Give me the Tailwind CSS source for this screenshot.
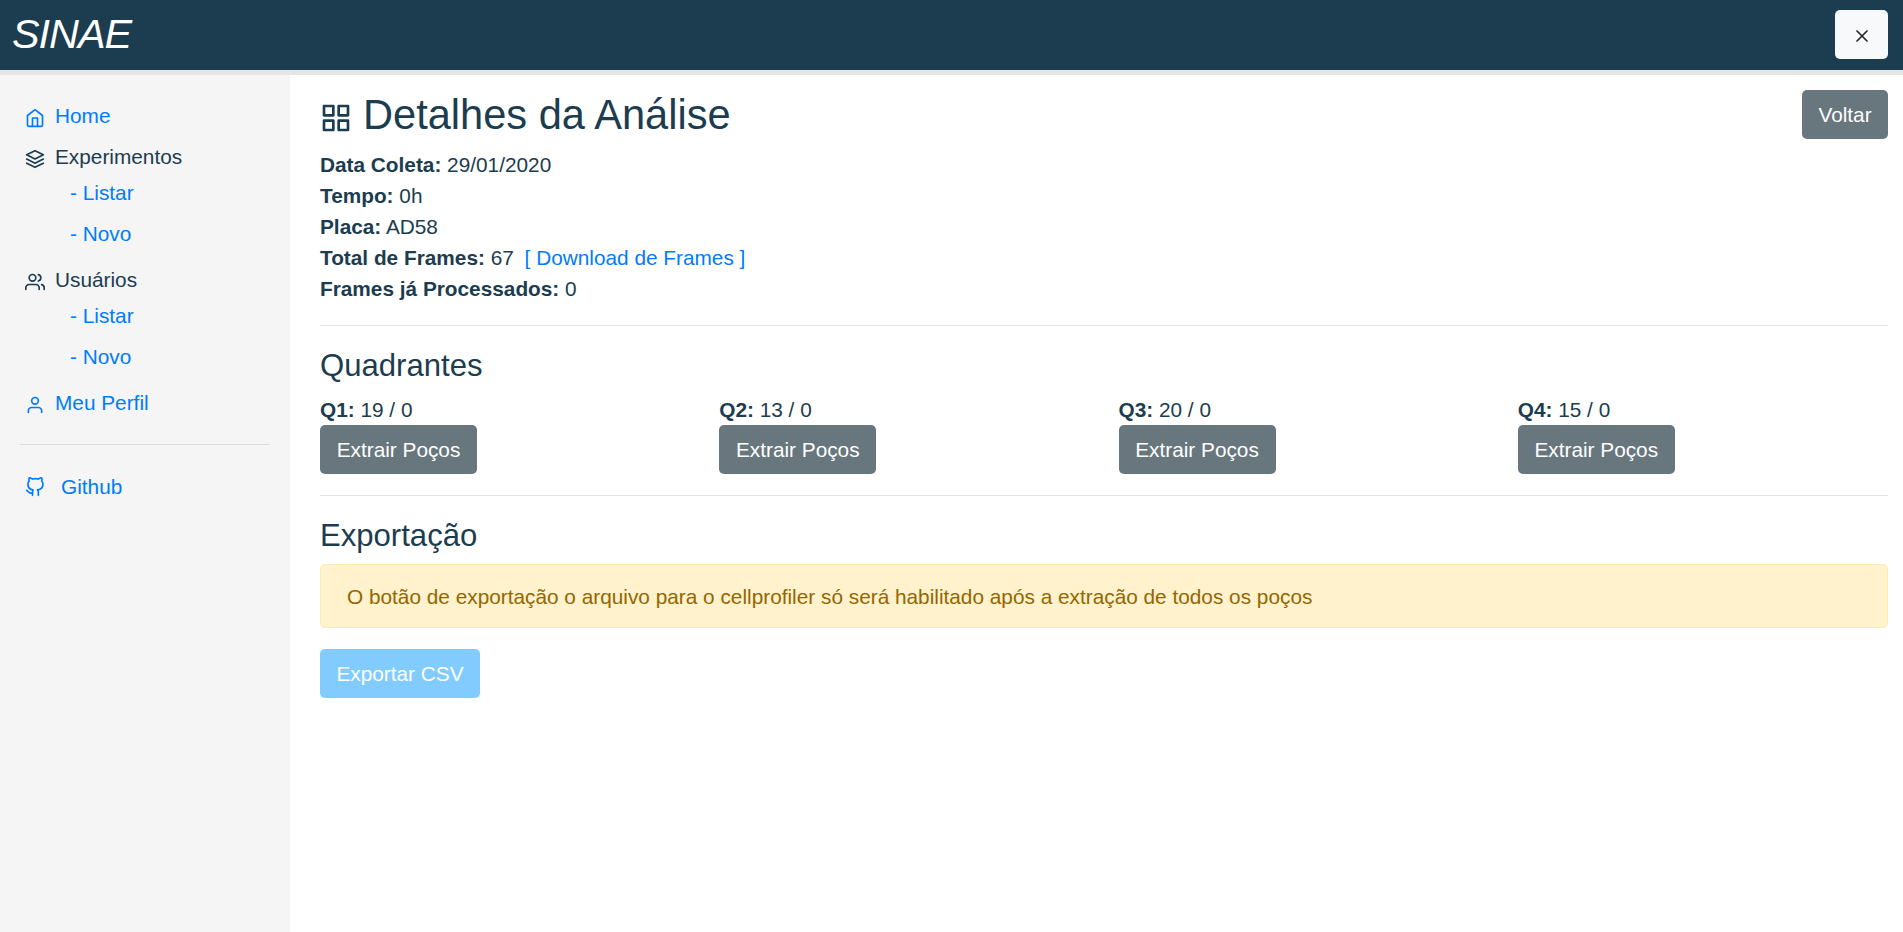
<!DOCTYPE html>
<html lang="pt-BR">
<head>
<meta charset="utf-8">
<title>SINAE</title>
<script src="https://cdn.jsdelivr.net/npm/@tailwindcss/browser@4"></script>
</head>
<body class="flex h-screen flex-col overflow-hidden bg-white font-['Liberation_Sans',Arial,sans-serif] text-[20.8px] leading-[31px] text-[#1c3c50]">
  <header class="flex h-[75px] shrink-0 items-start justify-between border-b-5 border-[#e5e5e5] bg-[#1c3c50] pt-[10px] pr-[15px] pl-3">
    <span class="text-[41.4px] leading-[49px] tracking-[-1px] text-white italic">SINAE</span>
    <button class="flex h-[49px] w-[53px] items-center justify-center rounded-[5px] bg-[#f8f9fa] pt-[3px] text-[#212529]">
      <svg class="size-5" viewBox="0 0 24 24" fill="none" stroke="currentColor" stroke-width="2" stroke-linecap="round" stroke-linejoin="round"><path d="M18 6 6 18M6 6l12 12"/></svg>
    </button>
  </header>
  <div class="flex grow">
    <nav class="w-[290px] shrink-0 bg-[#f5f5f5] px-5 pt-[25px] text-[#007bff]">
      <a class="flex items-center pl-[5px]">
        <svg class="mt-[5px] mr-[10px] size-5" viewBox="0 0 24 24" fill="none" stroke="currentColor" stroke-width="2" stroke-linecap="round" stroke-linejoin="round"><path d="m3 9 9-7 9 7v11a2 2 0 0 1-2 2H5a2 2 0 0 1-2-2z"/><path d="M9 22V12h6v10"/></svg>
        Home
      </a>
      <div class="mt-[10px] flex items-center pl-[5px] text-[#1c3c50]">
        <svg class="mt-[5px] mr-[10px] size-5" viewBox="0 0 24 24" fill="none" stroke="currentColor" stroke-width="2" stroke-linecap="round" stroke-linejoin="round"><path d="M12 2 2 7l10 5 10-5-10-5zM2 17l10 5 10-5M2 12l10 5 10-5"/></svg>
        Experimentos
      </div>
      <div class="mt-[5px] flex flex-col gap-[10px] pl-[50px]"><a>- Listar</a><a>- Novo</a></div>
      <div class="mt-[15px] flex items-center pl-[5px] text-[#1c3c50]">
        <svg class="mt-[5px] mr-[10px] size-5" viewBox="0 0 24 24" fill="none" stroke="currentColor" stroke-width="2" stroke-linecap="round" stroke-linejoin="round"><path d="M17 21v-2a4 4 0 0 0-4-4H5a4 4 0 0 0-4 4v2"/><circle cx="9" cy="7" r="4"/><path d="M23 21v-2a4 4 0 0 0-3-3.87M16 3.13a4 4 0 0 1 0 7.75"/></svg>
        Usuários
      </div>
      <div class="mt-[5px] flex flex-col gap-[10px] pl-[50px]"><a>- Listar</a><a>- Novo</a></div>
      <a class="mt-[15px] flex items-center pl-[5px]">
        <svg class="mt-[5px] mr-[10px] size-5" viewBox="0 0 24 24" fill="none" stroke="currentColor" stroke-width="2" stroke-linecap="round" stroke-linejoin="round"><path d="M20 21v-2a4 4 0 0 0-4-4H8a4 4 0 0 0-4 4v2"/><circle cx="12" cy="7" r="4"/></svg>
        Meu Perfil
      </a>
      <hr class="mt-[26px] mb-[26px] border-[#dddddd]">
      <a class="flex items-center pl-[5px]">
        <svg class="mt-px mr-[16px] size-5" viewBox="0 0 24 24" fill="none" stroke="currentColor" stroke-width="2" stroke-linecap="round" stroke-linejoin="round"><path d="M9 19c-5 1.5-5-2.5-7-3m14 6v-3.87a3.37 3.37 0 0 0-.94-2.61c3.14-.35 6.44-1.54 6.44-7A5.44 5.44 0 0 0 20 4.77 5.07 5.07 0 0 0 19.91 1S18.73.65 16 2.48a13.38 13.38 0 0 0-7 0C6.27.65 5.09 1 5.09 1A5.07 5.07 0 0 0 5 4.77a5.44 5.44 0 0 0-1.5 3.78c0 5.42 3.3 6.61 6.44 7A3.37 3.37 0 0 0 9 18.13V22"/></svg>
        Github
      </a>
    </nav>
    <main class="grow pt-[15px] pr-[15px] pl-[30px]">
      <div class="flex h-[59px] items-start justify-between">
        <h2 class="flex items-center text-[41.6px] leading-[49px]">
          <svg class="mt-[6px] mr-[11px] size-8" viewBox="0 0 24 24" fill="none" stroke="currentColor" stroke-width="2" stroke-linecap="round" stroke-linejoin="round"><path d="M3 3h7v7H3zM14 3h7v7h-7zM14 14h7v7h-7zM3 14h7v7H3z"/></svg>
          Detalhes da Análise
        </h2>
        <button class="h-[49px] w-[86px] rounded-[5px] bg-[#68767d] text-white">Voltar</button>
      </div>
      <p><b>Data Coleta:</b> 29/01/2020</p>
      <p><b>Tempo:</b> 0h</p>
      <p><b>Placa:</b> AD58</p>
      <p><b>Total de Frames:</b> 67 <a class="ml-[5px] text-[#007bff]">[ Download de Frames ]</a></p>
      <p><b>Frames já Processados:</b> 0</p>
      <hr class="mt-[21px] mb-[21px] border-[#e5e5e5]">
      <h4 class="mb-[10px] text-[31.1px] leading-[37px]">Quadrantes</h4>
      <div class="-mr-[29px] grid grid-cols-4">
        <div><p><b>Q1:</b> 19 / 0</p><button class="h-[49px] w-[157px] rounded-[5px] bg-[#68767d] text-white">Extrair Poços</button></div>
        <div><p><b>Q2:</b> 13 / 0</p><button class="h-[49px] w-[157px] rounded-[5px] bg-[#68767d] text-white">Extrair Poços</button></div>
        <div><p><b>Q3:</b> 20 / 0</p><button class="h-[49px] w-[157px] rounded-[5px] bg-[#68767d] text-white">Extrair Poços</button></div>
        <div><p><b>Q4:</b> 15 / 0</p><button class="h-[49px] w-[157px] rounded-[5px] bg-[#68767d] text-white">Extrair Poços</button></div>
      </div>
      <hr class="mt-[21px] mb-[21px] border-[#e5e5e5]">
      <h4 class="mb-[10px] text-[31.1px] leading-[37px]">Exportação</h4>
      <div class="mb-[21px] h-16 rounded-[5px] border border-[#ffecb5] bg-[#fff2cc] px-[26px] py-4 text-[#956600]">O botão de exportação o arquivo para o cellprofiler só será habilitado após a extração de todos os poços</div>
      <button class="h-[49px] w-[160px] rounded-[5px] bg-[#82cbff] text-white">Exportar CSV</button>
    </main>
  </div>
</body>
</html>
